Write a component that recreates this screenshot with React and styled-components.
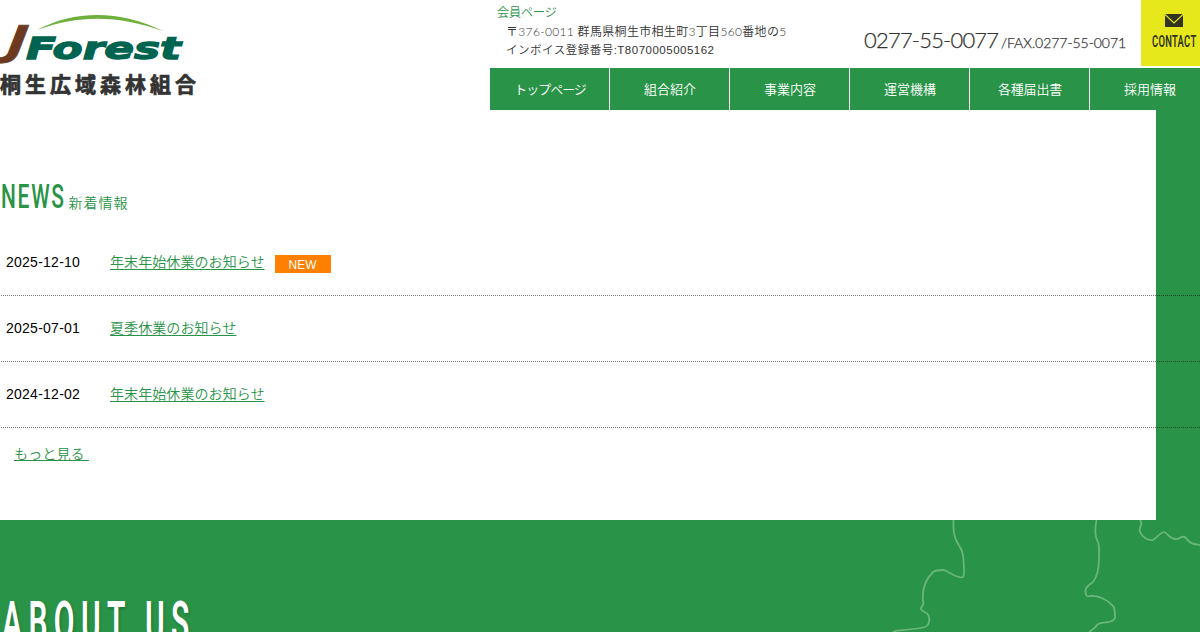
import styled, { createGlobalStyle } from "styled-components";

const GREEN = "#299347";

const GlobalStyle = createGlobalStyle`
  * {
    box-sizing: border-box;
  }

  body {
    margin: 0;
    height: 632px;
    overflow: hidden;

    color: #333;
    background-color: ${GREEN};

    font-family: "Liberation Sans", "Noto Sans CJK JP", sans-serif;
    font-weight: 350;
  }

  a {
    color: ${GREEN};
  }
`;

const Page = styled.div`
  width: 1200px;
  height: 632px;
  overflow: hidden;
`;

const Header = styled.header`
  display: flex;
  justify-content: space-between;

  height: 110px;

  background-color: #fff;
`;

const Brand = styled.h1`
  display: flex;
  flex-direction: column;

  margin: 0;
  width: 220px;

  svg {
    display: block;
  }
`;

const BrandName = styled.span`
  margin-top: 3px;

  color: #333;

  font-size: 21px;
  font-weight: 700;
  line-height: 36px;
  letter-spacing: 4px;
  white-space: nowrap;

  -webkit-text-stroke: 0.7px #333;
`;

const HeaderSide = styled.div`
  display: flex;
  flex-direction: column;

  width: 710px;
`;

const HeaderTop = styled.div`
  display: flex;

  height: 68px;
`;

const Address = styled.div`
  width: 374px;
  padding: 4px 0 0 7px;

  font-size: 12px;
  line-height: 18.5px;
  white-space: nowrap;

  a {
    text-decoration: none;
  }

  p {
    margin: 0;
    padding-left: 9px;
  }
`;

const AddressLine = styled.p`
  font-family: ${(props) => props.$font}, "Noto Sans CJK JP", sans-serif;
  font-size: ${(props) => props.$size}px;
  letter-spacing: ${(props) => props.$spacing}px;
`;

const Phone = styled.div`
  display: flex;
  align-items: baseline;

  width: 277px;
  padding-top: 26px;

  font-family: Lato, sans-serif;
  font-weight: 300;
  line-height: 28px;
  white-space: nowrap;

  -webkit-text-stroke: 0.25px #333;
`;

const Tel = styled.span`
  width: 137px;

  font-size: 22px;
  letter-spacing: -0.8px;
`;

const Fax = styled.span`
  font-size: 14px;
  letter-spacing: -0.05px;
`;

// Narrow display lettering: squeezed horizontally inside a fixed-width slot
const Narrow = styled.span`
  display: inline-block;

  width: ${(props) => props.$width}px;

  color: ${(props) => props.$color};

  font-family: Roboto, sans-serif;
  font-size: ${(props) => props.$size}px;
  font-weight: ${(props) => props.$weight || 400};
  line-height: 1;
  letter-spacing: ${(props) => props.$spacing || 0}px;
  white-space: nowrap;

  transform: scaleX(${(props) => props.$scale});
  transform-origin: left;
`;

const Contact = styled.a`
  display: flex;
  flex-direction: column;
  align-items: flex-start;

  width: 59px;
  height: 66px;
  padding: 14px 0 0 11px;
  gap: 6.5px;

  background-color: #e6e81c;

  text-decoration: none;

  svg {
    margin-left: 13px;
  }
`;

const Nav = styled.nav`
  display: flex;

  height: 42px;
`;

const NavItem = styled.a`
  flex: none;

  width: 120px;
  padding-left: 1px;

  border-right: 1px solid #fff;

  color: #fff !important;
  background-color: ${GREEN};

  font-size: 13px;
  line-height: 43px;
  letter-spacing: ${(props) => props.$spacing || 0}px;
  text-align: center;
  text-decoration: none;
`;

const News = styled.section`
  height: 410px;
  padding-top: 70px;

  background: linear-gradient(#fff, #fff) no-repeat;
  background-size: 1156px 100%;
`;

const NewsTitle = styled.h2`
  display: flex;
  align-items: baseline;

  height: 50px;
  margin: 0;
  padding-left: 1px;

  color: ${GREEN};

  font-size: 14px;
  font-weight: 350;
  letter-spacing: 1px;
`;

const NewsRow = styled.div`
  display: flex;
  align-items: center;

  height: 66px;
  margin-left: 1px;
  padding: 0 0 3px 5px;

  border-bottom: 1px dotted rgba(0, 0, 0, 0.5);

  font-size: 14px;

  time {
    width: 104px;
    padding-top: 2px;

    color: #000;

    letter-spacing: 0.25px;
  }

  a {
    margin-top: -1px;

    letter-spacing: 0.08px;
    text-underline-offset: 2px;
  }
`;

const NewBadge = styled.span`
  width: 56px;
  height: 18px;
  margin: 6px 0 0 10px;

  color: #fff;
  background-color: #ff8000;

  font-size: 12px;
  line-height: 20px;
  text-align: center;
`;

const MoreLink = styled.a`
  display: inline-block;

  margin: 15px 0 0 14px;

  font-size: 14px;
  line-height: 22px;
  letter-spacing: 0.15px;
  white-space: pre;
`;

const About = styled.section`
  display: flex;
  justify-content: space-between;

  height: 112px;

  h2 {
    margin: 74px 0 0 2px;
    text-shadow: 2px 2px 4px rgba(0, 0, 0, 0.2);
  }
`;

const NAV = [
  { label: "トップページ", spacing: -1 },
  { label: "組合紹介" },
  { label: "事業内容" },
  { label: "運営機構" },
  { label: "各種届出書", spacing: -0.2 },
  { label: "採用情報" },
];

const NEWS = [
  { date: "2025-12-10", title: "年末年始休業のお知らせ", isNew: true },
  { date: "2025-07-01", title: "夏季休業のお知らせ" },
  { date: "2024-12-02", title: "年末年始休業のお知らせ" },
];

function Logo() {
  return (
    <svg width="190" height="64" viewBox="0 0 190 64">
      <path d="M37 30 C75 10 120 10 163 31 C120 15.500 80 14 37 30Z" fill="#6fb03c" />
      <text
        transform="translate(6.500 54.500) skewX(-8) scale(1.25 1)"
        fontFamily="DejaVu Sans"
        fontWeight="700"
        fontStyle="italic"
        fontSize="41"
        fill="#6b3a1f"
        stroke="#6b3a1f"
        strokeWidth="0.8"
      >
        J
      </text>
      <text
        x="26"
        y="58.5"
        textLength="155"
        lengthAdjust="spacingAndGlyphs"
        fontFamily="DejaVu Sans"
        fontWeight="700"
        fontStyle="italic"
        fontSize="31"
        fill="#006450"
        stroke="#006450"
        strokeWidth="1.3"
      >
        Forest
      </text>
    </svg>
  );
}

function MailIcon() {
  return (
    <svg width="18" height="13" viewBox="0 0 18 13">
      <rect width="18" height="13" fill="#333322" />
      <path d="M0 0.5 L9 9 L18 0.5" fill="none" stroke="#e6e81c" strokeWidth="1.2" />
    </svg>
  );
}

// Prefecture borders behind the about block
function MapLines() {
  return (
    <svg width="320" height="112" viewBox="880 520 320 112" fill="none" stroke="#69b67c" strokeWidth="1.8">
      <path d="M953.5 520 C953 530 954 537 957 542 C961 549 963 551 963.5 560 C964 568 965 575 963 577 C957 579 951 573 944 570 C940 570 935 570 933 572 C925 580 922 590 923 601 C925 605 920 607 921 609 C922 613 928 611 929 617 C930 622 928 626 925 627 C915 630 905 629 895 631 L892 633" />
      <path d="M1096.500 520 C1095 528 1095 536 1097 540 C1100 544 1099 550 1099 558 C1099 570 1097 577 1093 582 C1089 585 1085 587 1085.500 592 C1086 596 1087 597 1090 596 C1097 595 1107 599 1113 606 C1115 608 1115 611 1115 617 C1115 620 1113 621 1109 622 C1103 623 1099 622 1097 625 C1094 630 1091 629 1089 633" />
      <path d="M1140 520 C1144 525 1138 527 1140 532 C1142 537 1148 541 1153 540 C1156 538 1160 533 1164 532 C1168 533 1169 539 1176 539 C1180 540 1182 534 1186 538 C1190 544 1194 544 1200 545" />
    </svg>
  );
}

function App() {
  return (
    <Page>
      <GlobalStyle />
      <Header>
        <Brand>
          <Logo />
          <BrandName>桐生広域森林組合</BrandName>
        </Brand>
        <HeaderSide>
          <HeaderTop>
            <Address>
              <a href="#member">会員ページ</a>
              <AddressLine $font="Lato" $size={12} $spacing={0.32}>
                〒376-0011 群馬県桐生市相生町3丁目560番地の5
              </AddressLine>
              <AddressLine $font="Liberation Sans" $size={11.5} $spacing={0.5}>
                インボイス登録番号:T8070005005162
              </AddressLine>
            </Address>
            <Phone>
              <Tel>0277-55-0077</Tel>
              <Fax>/FAX.0277-55-0071</Fax>
            </Phone>
            <Contact href="#contact">
              <MailIcon />
              <Narrow $width={46} $size={16.5} $scale={0.57} $weight={600} $spacing={0.5} $color="#333322">
                CONTACT
              </Narrow>
            </Contact>
          </HeaderTop>
          <Nav>
            {NAV.map((item) => (
              <NavItem key={item.label} href="#" $spacing={item.spacing}>
                {item.label}
              </NavItem>
            ))}
          </Nav>
        </HeaderSide>
      </Header>
      <News>
        <NewsTitle>
          <Narrow $width={67.5} $size={33.5} $scale={0.625} $weight={500} $spacing={2.8}>
            NEWS
          </Narrow>
          新着情報
        </NewsTitle>
        {NEWS.map((item) => (
          <NewsRow key={item.date}>
            <time>{item.date}</time>
            <a href="#news">{item.title}</a>
            {item.isNew && <NewBadge>NEW</NewBadge>}
          </NewsRow>
        ))}
        <MoreLink href="#more">{"もっと見る "}</MoreLink>
      </News>
      <About>
        <h2>
          <Narrow $width={200} $size={56} $scale={0.535} $weight={600} $spacing={12} $color="#fff">
            ABOUT US
          </Narrow>
        </h2>
        <MapLines />
      </About>
    </Page>
  );
}

export default App;
